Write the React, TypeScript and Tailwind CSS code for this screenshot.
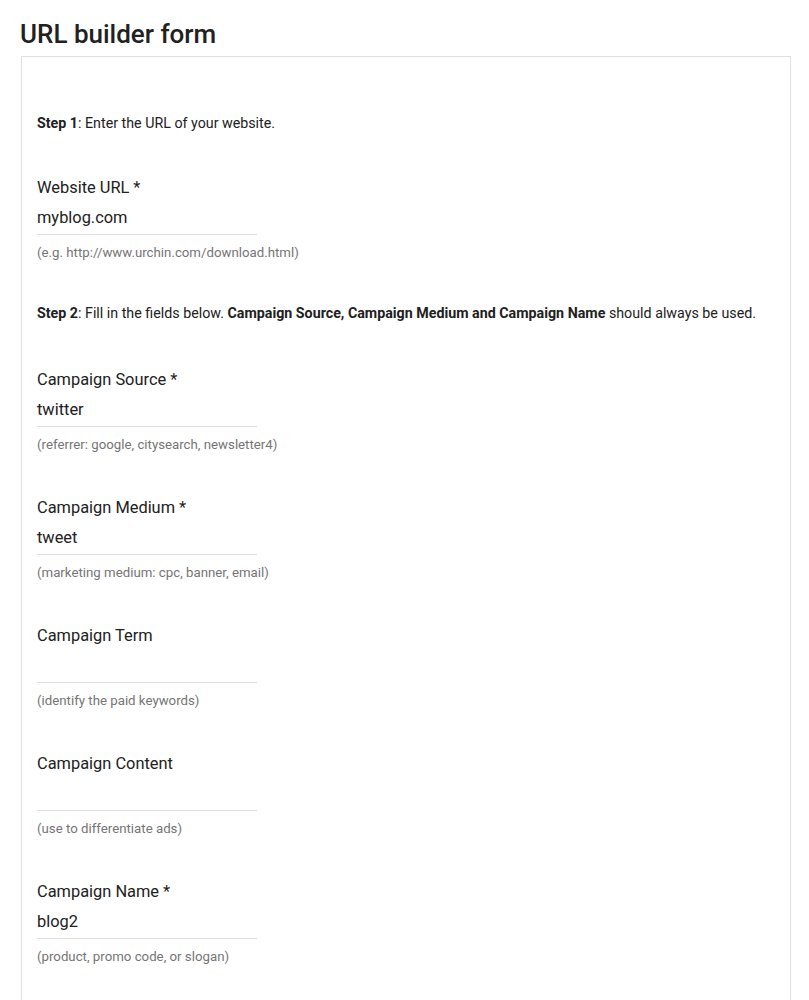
import React from "react";

type Field = { label: string; value: string; hint: string };

const fields: Field[] = [
  { label: "Campaign Source *", value: "twitter", hint: "(referrer: google, citysearch, newsletter4)" },
  { label: "Campaign Medium *", value: "tweet", hint: "(marketing medium: cpc, banner, email)" },
  { label: "Campaign Term", value: "", hint: "(identify the paid keywords)" },
  { label: "Campaign Content", value: "", hint: "(use to differentiate ads)" },
  { label: "Campaign Name *", value: "blog2", hint: "(product, promo code, or slogan)" },
];

function FieldBlock({ f }: { f: Field }) {
  return (
    <div className="mb-[43px]">
      <div className="text-[16.4px] leading-[24px] text-[#212121]">{f.label}</div>
      <div className="mt-[6px] w-[220px] h-[29px] border-b border-[#e0e0e0] text-[16.4px] leading-[24px] text-[#212121]">
        {f.value}
      </div>
      <div className="mt-[10px] text-[13.25px] leading-[16px] text-[#757575]">{f.hint}</div>
    </div>
  );
}

export default function App() {
  return (
    <div className="bg-white min-h-[1000px] pt-[18px] pl-[20px] pr-[18px]" style={{ fontFamily: "Roboto, 'Noto Sans', Arial, sans-serif" }}>
      <h1 className="text-[26px] leading-[32px] font-medium text-[#212121]">URL builder form</h1>
      <div className="mt-[6px] ml-[1px] border border-[#e0e0e0] pl-[15px] pt-[57px] pb-[80px]">
        <p className="text-[14.25px] leading-[18px] text-[#212121]">
          <b className="font-bold">Step 1</b>: Enter the URL of your website.
        </p>
        <div className="mt-[44px]">
          <FieldBlock f={{ label: "Website URL *", value: "myblog.com", hint: "(e.g. http://www.urchin.com/download.html)" }} />
        </div>
        <p className="text-[14.25px] leading-[18px] text-[#212121]">
          <b className="font-bold">Step 2</b>: Fill in the fields below.{" "}
          <b className="font-bold">Campaign Source, Campaign Medium and Campaign Name</b> should always be used.
        </p>
        <div className="mt-[46px]">
          {fields.map((f) => (
            <FieldBlock key={f.label} f={f} />
          ))}
        </div>
      </div>
    </div>
  );
}
